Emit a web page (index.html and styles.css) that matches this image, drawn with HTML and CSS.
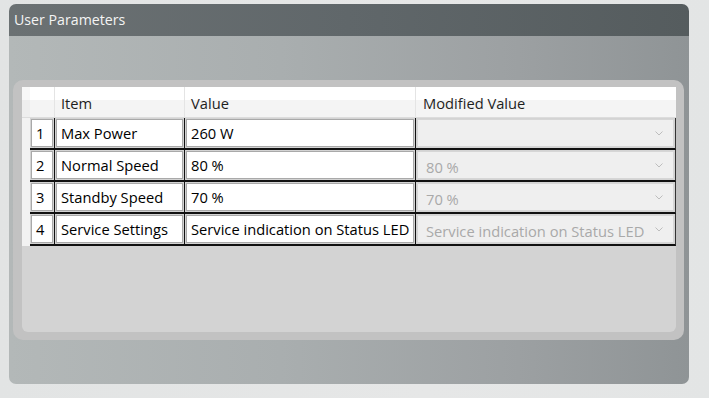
FILE: index.html
```html
<!DOCTYPE html>
<html>
<head>
<meta charset="utf-8">
<link rel="stylesheet" href="styles.css">
</head>
<body>
<div class="page">
  <div class="panel">
    <div class="panel-header">User Parameters</div>
    <div class="panel-body">
      <div class="box">
        <div class="inner">
          <div class="grid">
            <div class="h h-gutter"></div>
            <div class="h h-corner"></div>
            <div class="h">Item</div>
            <div class="h">Value</div>
            <div class="h h-last">Modified Value</div>

            <div class="gutter"></div>
            <div class="cell"><div class="tb num">1</div></div>
            <div class="cell"><div class="tb">Max Power</div></div>
            <div class="cell"><div class="tb">260 W</div></div>
            <div class="cell last"><div class="combo"><span></span><svg class="chev" viewBox="0 0 8 5" width="8" height="5"><polyline points="0.5,0.5 4,4 7.5,0.5" fill="none" stroke="#bdbdbd" stroke-width="1"/></svg></div></div>

            <div class="gutter"></div>
            <div class="cell"><div class="tb num">2</div></div>
            <div class="cell"><div class="tb">Normal Speed</div></div>
            <div class="cell"><div class="tb">80 %</div></div>
            <div class="cell last"><div class="combo"><span>80 %</span><svg class="chev" viewBox="0 0 8 5" width="8" height="5"><polyline points="0.5,0.5 4,4 7.5,0.5" fill="none" stroke="#bdbdbd" stroke-width="1"/></svg></div></div>

            <div class="gutter"></div>
            <div class="cell"><div class="tb num">3</div></div>
            <div class="cell"><div class="tb">Standby Speed</div></div>
            <div class="cell"><div class="tb">70 %</div></div>
            <div class="cell last"><div class="combo"><span>70 %</span><svg class="chev" viewBox="0 0 8 5" width="8" height="5"><polyline points="0.5,0.5 4,4 7.5,0.5" fill="none" stroke="#bdbdbd" stroke-width="1"/></svg></div></div>

            <div class="gutter"></div>
            <div class="cell"><div class="tb num">4</div></div>
            <div class="cell"><div class="tb">Service Settings</div></div>
            <div class="cell"><div class="tb">Service indication on Status LED</div></div>
            <div class="cell last"><div class="combo"><span>Service indication on Status LED</span><svg class="chev" viewBox="0 0 8 5" width="8" height="5"><polyline points="0.5,0.5 4,4 7.5,0.5" fill="none" stroke="#bdbdbd" stroke-width="1"/></svg></div></div>
          </div>
        </div>
      </div>
    </div>
  </div>
</div>
</body>
</html>
```

FILE: styles.css
```css
html, body {
  margin: 0;
  padding: 0;
}
body {
  width: 709px;
  height: 398px;
  background: linear-gradient(90deg, #e2e4e4 0%, #e6e7e7 60%, #e3e5e5 100%);
  font-family: "Open Sans", "Noto Sans", sans-serif;
  font-size: 14.7px;
  overflow: hidden;
}
.page {
  padding: 4px 20px 14px 9px;
  height: 380px;
}
.panel {
  width: 680px;
  height: 380px;
  border-radius: 7px;
  overflow: hidden;
  display: flex;
  flex-direction: column;
}
.panel-header {
  height: 32px;
  line-height: 32px;
  padding-left: 5px;
  font-size: 14.2px;
  color: #f4f4f4;
  background: linear-gradient(90deg, #6b7173 0%, #60676a 50%, #555c5e 100%);
}
.panel-body {
  flex: 1;
  padding: 44px 5px 44px 4px;
  background: linear-gradient(90deg, #b3b8b8 0%, #a9aeaf 40%, #9ca0a2 75%, #8f9496 100%);
}
.box {
  height: 100%;
  box-sizing: border-box;
  border-radius: 10px;
  background: #c2c2c2;
  padding: 7px 8px 8px 9px;
}
.inner {
  height: 100%;
  background: #d3d3d3;
  border-radius: 0 0 6px 6px;
}
.grid {
  display: grid;
  grid-template-columns: 8px 25px 130px 231px 260px;
  grid-template-rows: 31px 32px 32px 32px 32px;
}
.h {
  background: linear-gradient(#ffffff 0 45%, #f4f4f4 45% 100%);
  border-right: 1px solid #e4e4e4;
  border-bottom: 1px solid #dcdcdc;
  color: #1e1e1e;
  padding-left: 6px;
  line-height: 33px;
  box-sizing: border-box;
}
.h-gutter {
  border-right: none;
  padding: 0;
  background: linear-gradient(#f7f7f7 0 45%, #eeeeee 45% 100%);
}
.h-corner {
  padding: 0;
}
.h-last {
  border-right: none;
  padding-left: 7px;
}
.gutter {
  background: #f2f2f2;
}
.cell {
  box-sizing: border-box;
  border-right: 1px solid #111;
  border-bottom: 2px solid #111;
  padding: 1px;
}
.cell.last {
  border-right: 1px solid #333;
}
.tb {
  box-sizing: border-box;
  height: 100%;
  background: #fff;
  border: 1px solid #a9a9a9;
  padding-left: 4px;
  line-height: 27px;
  color: #000;
  white-space: nowrap;
  overflow: hidden;
}
.num {
  padding-left: 4px;
}
.combo {
  box-sizing: border-box;
  height: 100%;
  background: #efefef;
  border: 1px solid #d6d6d6;
  padding-left: 8px;
  padding-right: 10px;
  display: flex;
  align-items: center;
  justify-content: space-between;
  color: #a9a9a9;
  white-space: nowrap;
}
.combo span {
  padding-top: 3px;
}
.chev {
  display: block;
}
```
